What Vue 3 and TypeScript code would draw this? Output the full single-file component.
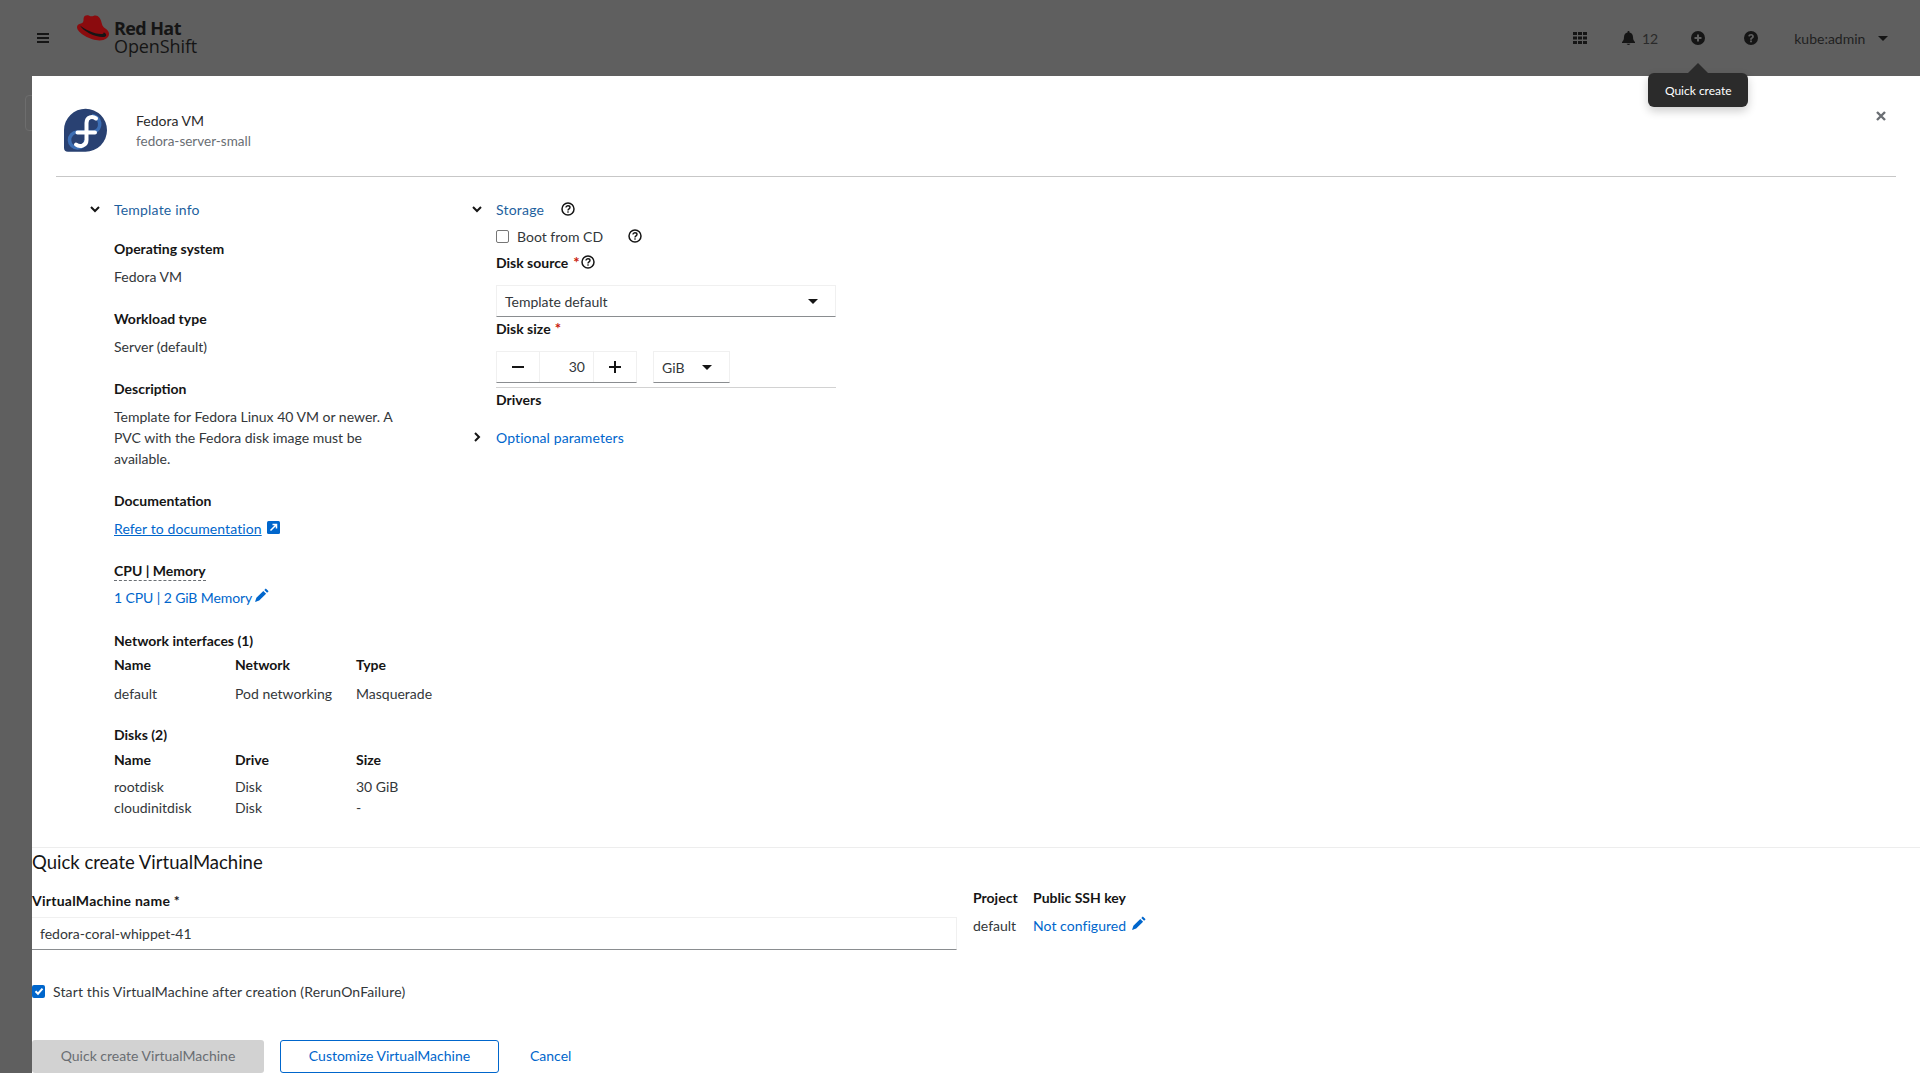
<script setup lang="ts">
interface Row { a: string; b: string; c: string }
const nics: Row[] = [{ a: 'default', b: 'Pod networking', c: 'Masquerade' }]
const disks: Row[] = [
  { a: 'rootdisk', b: 'Disk', c: '30 GiB' },
  { a: 'cloudinitdisk', b: 'Disk', c: '-' },
]
</script>

<template>
  <div class="page">
    <header class="mast">
      <svg class="burger" viewBox="0 0 12 10" width="12" height="10"><path d="M0 0h12v2H0zM0 4h12v2H0zM0 8h12v2H0z" fill="#151515" /></svg>
      <div class="brand">
        <svg class="hat" viewBox="0 0 33 27" width="33" height="27">
          <path d="M8 1.800c2-1.200 4-.2 5.500.4 1.600.6 3-.6 5-.6 3 0 5 3 6 7 .6 2.200 1.200 3.800 2.500 5 2.500 1.800 5 3.400 5 6.400 0 3.500-3.800 6.500-9.500 6.500C14 26.500 0 19 0 13.300c0-1.500.8-2.700 2.500-3.300C4.500 9.500 6.500 9 6.500 6c0-1.800.3-3.300 1.500-4.200z" fill="#8b0b0e" />
          <path d="M3 11.500c4 3.500 14 8.500 21 8.500 1.800 0 2.800-.5 2.800-1.800 3 1.600 3.200 4.300.2 4.800-7 1-21-5.500-24-11.500z" fill="#151515" />
        </svg>
        <div class="brandtext"><b>Red Hat</b><span>OpenShift</span></div>
      </div>
      <div class="tools">
        <svg class="grid" viewBox="0 0 14 12" width="14" height="12"><path d="M0 0h4v3H0zM5 0h4v3H5zM10 0h4v3h-4zM0 4.500h4v3H0zM5 4.500h4v3H5zM10 4.500h4v3h-4zM0 9h4v3H0zM5 9h4v3H5zM10 9h4v3h-4z" fill="#151515" /></svg>
        <div class="bell">
          <svg viewBox="0 0 13 14" width="13" height="14"><path d="M6.500 0c.6 0 1 .4 1 1v.5c2.200.4 3.500 2.200 3.500 4.500 0 3 1 4 2 5v1H0v-1c1-1 2-2 2-5 0-2.300 1.300-4.100 3.500-4.500V1c0-.6.400-1 1-1zM4.800 12.800h3.400c0 .7-.8 1.200-1.700 1.200s-1.700-.5-1.700-1.200z" fill="#151515" /></svg>
          <span>12</span>
        </div>
        <div class="plus">
          <svg viewBox="0 0 14 14" width="14" height="14"><path fill-rule="evenodd" d="M7 0a7 7 0 1 1 0 14A7 7 0 0 1 7 0zM6 3.500v2.500H3.500v2H6v2.500h2V8h2.500V6H8V3.500z" fill="#151515" /></svg>
          <div class="tooltip"><i></i>Quick create</div>
        </div>
        <svg class="qm" viewBox="0 0 14 14" width="14" height="14"><path fill-rule="evenodd" d="M7 0a7 7 0 1 1 0 14A7 7 0 0 1 7 0zM7.200 3C5.500 3 4.400 3.900 4.200 5.300l1.700.3c.1-.7.500-1 1.200-1 .6 0 1 .3 1 .8 0 .4-.3.700-.9 1.100-.8.500-1.100 1-1.100 1.900v.3h1.800v-.2c0-.5.200-.7.800-1.100.8-.5 1.200-1.100 1.200-2 0-1.400-1.100-2.400-2.700-2.400zM6.100 9.600v1.600h1.800V9.600z" fill="#151515" /></svg>
        <div class="user"><span>kube:admin</span><em class="caret dark"></em></div>
      </div>
    </header>

    <div class="below">
      <div class="gutter"><div class="ghost"></div></div>
      <main class="modal">
        <div class="head">
          <svg class="fedora" viewBox="0 0 43 44" width="43" height="44">
            <path d="M0 22a21.500 21.500 0 1 1 21.500 21.700H4a4 4 0 0 1-4-4z" fill="#294172" />
            <path d="M28 7.500a8.500 8.500 0 0 1 2 16.500H13a8 8 0 1 0 8.500 8" fill="none" stroke="#3c6eb4" stroke-width="3.600" />
            <path d="M32 10.500C28.500 8 22.500 8.500 22.500 15V32C22.500 38 15.500 39.500 12 36.500M13.500 24.500H31" fill="none" stroke="#fff" stroke-width="4" stroke-linecap="round" />
          </svg>
          <div class="titles">
            <div class="t1">Fedora VM</div>
            <div class="t2">fedora-server-small</div>
          </div>
          <svg class="close" viewBox="0 0 10 10" width="10" height="10"><path d="M1 1l8 8M9 1l-8 8" stroke="#6a6e73" stroke-width="2.400" fill="none" /></svg>
        </div>

        <div class="cols">
          <section class="info">
            <div class="exp"><svg class="chev" viewBox="0 0 10 10" width="10" height="10"><path d="M1 3l4 4 4-4" fill="none" stroke="#151515" stroke-width="2" /></svg><span class="dk">Template info</span></div>
            <div class="inner">
              <h4 class="first">Operating system</h4>
              <p>Fedora VM</p>
              <h4>Workload type</h4>
              <p>Server (default)</p>
              <h4>Description</h4>
              <p class="desc">Template for Fedora Linux 40 VM or newer. A PVC with the Fedora disk image must be available.</p>
              <h4>Documentation</h4>
              <p><a class="lnk">Refer to documentation</a>
                <svg class="ext" viewBox="0 0 13 13" width="13" height="13"><rect width="13" height="13" rx="1.500" fill="#06c" /><path d="M3.500 9.500L9 4M5.500 3.500h4v4" fill="none" stroke="#fff" stroke-width="1.500" /></svg>
              </p>
              <h4><span class="dash">CPU | Memory</span></h4>
              <p class="cpu"><span class="blue">1 CPU | 2 GiB Memory</span>
                <svg class="pen" viewBox="0 0 14 14" width="14" height="14"><path d="M10.800.4l2.800 2.800-1.500 1.500-2.800-2.800zM8.300 2.900l2.800 2.800-6.900 6.900L0 14l1.400-4.200z" fill="#06c" /></svg>
              </p>
              <h4 class="net">Network interfaces (1)</h4>
              <div class="tbl">
                <b>Name</b><b>Network</b><b>Type</b>
                <template v-for="r in nics" :key="r.a"><span class="v1">{{ r.a }}</span><span class="v1">{{ r.b }}</span><span class="v1">{{ r.c }}</span></template>
              </div>
              <h4 class="dk2">Disks (2)</h4>
              <div class="tbl dtbl">
                <b>Name</b><b>Drive</b><b>Size</b>
                <template v-for="r in disks" :key="r.a"><span>{{ r.a }}</span><span>{{ r.b }}</span><span>{{ r.c }}</span></template>
              </div>
            </div>
          </section>

          <section class="storage">
            <div class="exp"><svg class="chev" viewBox="0 0 10 10" width="10" height="10"><path d="M1 3l4 4 4-4" fill="none" stroke="#151515" stroke-width="2" /></svg><span class="dk">Storage</span>
              <svg class="hlp h1" viewBox="0 0 14 14" width="14" height="14"><circle cx="7" cy="7" r="6" fill="none" stroke="#151515" stroke-width="1.500" /><path d="M5 5.500C5 4.300 6 3.800 7 3.800s2 .6 2 1.700c0 1.400-2 1.400-2 3" fill="none" stroke="#151515" stroke-width="1.400" /><rect x="6.300" y="9.300" width="1.400" height="1.400" fill="#151515" /></svg>
            </div>
            <div class="inner2">
              <div class="boot"><span class="cbox"></span><span>Boot from CD</span>
                <svg class="hlp h2" viewBox="0 0 14 14" width="14" height="14"><circle cx="7" cy="7" r="6" fill="none" stroke="#151515" stroke-width="1.500" /><path d="M5 5.500C5 4.300 6 3.800 7 3.800s2 .6 2 1.700c0 1.400-2 1.400-2 3" fill="none" stroke="#151515" stroke-width="1.400" /><rect x="6.300" y="9.300" width="1.400" height="1.400" fill="#151515" /></svg>
              </div>
              <div class="lab src"><b>Disk source</b><i>*</i>
                <svg class="hlp" viewBox="0 0 14 14" width="14" height="14"><circle cx="7" cy="7" r="6" fill="none" stroke="#151515" stroke-width="1.500" /><path d="M5 5.500C5 4.300 6 3.800 7 3.800s2 .6 2 1.700c0 1.400-2 1.400-2 3" fill="none" stroke="#151515" stroke-width="1.400" /><rect x="6.300" y="9.300" width="1.400" height="1.400" fill="#151515" /></svg>
              </div>
              <div class="select"><span>Template default</span><em class="caret dark"></em></div>
              <div class="lab size"><b>Disk size</b><i>*</i></div>
              <div class="sizer">
                <div class="stepper">
                  <div class="sb"><svg viewBox="0 0 12 2" width="12" height="2"><path d="M0 0h12v2H0z" fill="#151515" /></svg></div>
                  <div class="num">30</div>
                  <div class="sb r"><svg viewBox="0 0 12 12" width="12" height="12"><path d="M5 0h2v5h5v2H7v5H5V7H0V5h5z" fill="#151515" /></svg></div>
                </div>
                <div class="unit"><span>GiB</span><em class="caret dark"></em></div>
              </div>
              <div class="lab drv"><b>Drivers</b></div>
            </div>
            <div class="exp opt"><svg class="chev" viewBox="0 0 10 10" width="10" height="10"><path d="M3 1l4 4-4 4" fill="none" stroke="#151515" stroke-width="2" /></svg><span class="blue">Optional parameters</span></div>
          </section>
        </div>

        <footer class="foot">
          <h2>Quick create VirtualMachine</h2>
          <div class="formrow">
            <div class="namecol">
              <label>VirtualMachine name *</label>
              <div class="field">fedora-coral-whippet-41</div>
            </div>
            <div class="pcol"><b>Project</b><span>default</span></div>
            <div class="kcol"><b>Public SSH key</b>
              <span class="blue">Not configured
                <svg class="pen" viewBox="0 0 14 14" width="14" height="14"><path d="M10.800.4l2.800 2.800-1.500 1.500-2.800-2.800zM8.300 2.900l2.800 2.800-6.900 6.900L0 14l1.400-4.200z" fill="#06c" /></svg>
              </span>
            </div>
          </div>
          <div class="start">
            <span class="checked"><svg viewBox="0 0 12 12" width="12" height="12"><path d="M2.500 6.200l2.500 2.500 4.500-5" fill="none" stroke="#fff" stroke-width="2" /></svg></span>
            <span class="starttext">Start this VirtualMachine after creation (RerunOnFailure)</span>
          </div>
          <div class="btns">
            <button class="b-dis">Quick create VirtualMachine</button>
            <button class="b-sec">Customize VirtualMachine</button>
            <button class="b-link">Cancel</button>
          </div>
        </footer>
      </main>
    </div>
  </div>
</template>

<style>
html, body { margin: 0; padding: 0; overflow: hidden; }
</style>

<style scoped>
* { box-sizing: border-box; }
.page { width: 1920px; height: 1073px; overflow: hidden; display: flex; flex-direction: column; background: #5f5f5f; font-family: "Lato", "Liberation Sans", sans-serif; font-size: 14px; color: #151515; }
.mast { height: 76px; flex: none; display: flex; align-items: center; position: relative; }
.burger { margin-left: 37px; }
.brand { display: flex; margin-left: 28px; align-items: flex-start; margin-top: -8px; }
.brandtext { display: flex; flex-direction: column; margin-left: 4px; margin-top: 5px; line-height: 18px; font-size: 18px; font-family: "Open Sans", sans-serif; color: #151515; }
.brandtext b { font-weight: 700; letter-spacing: -.6px; }
.brandtext span { letter-spacing: -.1px; }
.tools { position: absolute; left: 0; top: 0; height: 76px; width: 100%; display: flex; align-items: center; padding-left: 1573px; }
.bell { margin-left: 35px; display: flex; align-items: center; gap: 7px; color: #2a2a2a; font-size: 14px; }
.plus { margin-left: 33px; position: relative; display: flex; }
.qm { margin-left: 39px; }
.user { margin-left: 36px; display: flex; align-items: center; gap: 13px; font-size: 14px; color: #1f1f1f; }
.caret { display: inline-block; width: 0; height: 0; border-left: 5px solid transparent; border-right: 5px solid transparent; border-top: 5px solid #151515; }
.tooltip { position: absolute; top: 42px; left: 50%; transform: translateX(-50%); width: 100px; height: 34px; background: #2b2b2b; color: #fff; border-radius: 6px; font-size: 12px; display: flex; align-items: center; justify-content: center; white-space: nowrap; box-shadow: 0 4px 10px rgba(0,0,0,.2); z-index: 5; }
.tooltip i { position: absolute; top: -10px; left: 40px; width: 0; height: 0; border-left: 10px solid transparent; border-right: 10px solid transparent; border-bottom: 10px solid #2b2b2b; }
.below { flex: 1; display: flex; min-height: 0; }
.gutter { width: 32px; flex: none; padding-top: 19px; overflow: hidden; }
.ghost { width: 20px; height: 36px; margin-left: 25px; border: 1px solid #6d6d6d; border-radius: 4px; }
.modal { flex: 1; background: #fff; display: flex; flex-direction: column; position: relative; min-width: 0; }
.head { height: 101px; margin: 0 24px 0 24px; border-bottom: 1px solid #c7c7c7; display: flex; align-items: flex-start; padding: 32px 0 0 8px; position: relative; }
.fedora { flex: none; }
.titles { margin-left: 29px; padding-top: 3px; }
.t1 { line-height: 20px; color: #2a2a2a; font-size: 14px; }
.t2 { line-height: 20px; color: #6a6e73; font-size: 13.500px; }
.close { position: absolute; right: 10px; top: 35px; }
.cols { display: flex; height: 670px; flex: none; padding-top: 22px; }
.info { width: 356px; margin-left: 58px; flex: none; }
.storage { flex: 1; margin-left: 26px; }
.exp { display: flex; align-items: center; height: 20px; }
.exp .chev { flex: none; margin-left: 0; margin-right: 9px; width: 10px; }
.exp .dk { color: #1e5f9e; margin-left: 5px; letter-spacing: .2px; }
.exp .blue { margin-left: 5px; letter-spacing: .1px; }
.inner { padding: 0 0 0 24px; }
.blue { color: #06c; }
h4 { margin: 23px 0 0; font-size: 14px; font-weight: 700; line-height: 18px; color: #151515; }
h4.first { margin-top: 14px; padding-top: 7px; }
.inner p { margin: 9px 0 0; line-height: 20px; font-size: 14px; color: #33373a; }
.inner p.desc { width: 290px; line-height: 21px; margin-top: 8px; }
.lnk { color: #06c; text-decoration: underline; letter-spacing: .1px; }
.ext { vertical-align: 0; margin-left: 5px; }
.dash { border-bottom: 1px dashed #6a6e73; padding-bottom: 1px; }
.pen { vertical-align: 1px; margin-left: 2px; }
.inner p.cpu { margin-top: 8px; letter-spacing: -.1px; }
.cpu .pen { margin-left: 3px; }
h4.net { margin-top: 24px; }
.tbl { display: grid; grid-template-columns: 121px 121px 1fr; margin-top: 6px; font-size: 14px; line-height: 21px; width: 340px; color: #33373a; }
.tbl b { font-size: 14px; color: #151515; line-height: 18px; margin-bottom: 9px; }
h4.dk2 { margin-top: 22px; }
.dtbl { line-height: 21px; margin-top: 7px; }
.dtbl b { margin-bottom: 7px; }
.hlp { flex: none; }
.h1 { margin-left: 17px; }
.inner2 { padding-left: 24px; }
.boot { display: flex; align-items: center; margin-top: 7px; height: 20px; color: #33373a; }
.cbox { width: 13px; height: 13px; border: 1px solid #767676; border-radius: 2px; margin-right: 8px; flex: none; }
.h2 { margin-left: 25px; }
.lab { display: flex; align-items: center; height: 18px; }
.lab b { font-size: 14px; }
.lab i { color: #c9190b; font-style: normal; font-weight: 700; margin: 0 1px 0 5px; font-size: 15px; }
.size i { margin-left: 4px; }
.src { margin-top: 7px; }
.select { width: 340px; height: 32px; margin-top: 14px; border: 1px solid #f0f0f0; border-bottom-color: #8a8d90; display: flex; align-items: center; justify-content: space-between; padding: 0 17px 0 8px; color: #33373a; }
.size { margin-top: 2px; }
.sizer { width: 340px; margin-top: 14px; border-bottom: 1px solid #d2d2d2; display: flex; height: 37px; padding-bottom: 4px; }
.stepper { display: flex; width: 141px; border: 1px solid #f0f0f0; border-bottom-color: #8a8d90; }
.sb { width: 43px; display: flex; align-items: center; justify-content: center; border-right: 1px solid #f0f0f0; }
.sb.r { border-right: 0; border-left: 1px solid #f0f0f0; width: 43px; }
.num { flex: 1; text-align: right; line-height: 30px; padding-right: 8px; color: #33373a; }
.unit { width: 77px; margin-left: 16px; border: 1px solid #f0f0f0; border-bottom-color: #8a8d90; display: flex; align-items: center; padding: 0 17px 0 8px; justify-content: space-between; color: #33373a; }
.drv { margin-top: 2px; }
.opt { margin-top: 19px; }
.foot { border-top: 1px solid #ededed; height: 226px; flex: none; }
.foot h2 { margin: 1px 0 0; font-size: 18.500px; font-weight: 400; line-height: 26px; color: #151515; }
.formrow { display: flex; margin-top: 14px; }
.namecol { width: 925px; flex: none; padding-top: 3px; }
.namecol label { font-weight: 700; font-size: 14px; line-height: 18px; display: block; letter-spacing: .25px; }
.field { height: 33px; margin-top: 7px; border: 1px solid #f0f0f0; border-bottom-color: #8a8d90; border-left: 0; padding-left: 8px; line-height: 31px; color: #33373a; }
.pcol { margin-left: 16px; width: 60px; flex: none; display: flex; flex-direction: column; }
.pcol b, .kcol b { font-size: 14px; line-height: 18px; }
.pcol span { margin-top: 9px; line-height: 20px; color: #33373a; }
.kcol { display: flex; flex-direction: column; }
.kcol .blue { margin-top: 9px; line-height: 20px; letter-spacing: .05px; }
.start { display: flex; align-items: center; margin-top: 31px; height: 20px; color: #33373a; }
.starttext { letter-spacing: .14px; }
.checked { width: 13px; height: 13px; border-radius: 2px; background: #06c; display: flex; align-items: center; justify-content: center; margin-right: 8px; }
.btns { display: flex; margin-top: 39px; align-items: center; }
button { font: inherit; height: 33px; border-radius: 3px; background: none; border: 0; padding: 0 0 2px; }
.b-dis { width: 232px; background: #d2d2d2; color: #6a6e73; }
.b-sec { width: 219px; margin-left: 16px; border: 1px solid #06c; color: #06c; }
.b-link { margin-left: 31px; color: #06c; }
</style>
